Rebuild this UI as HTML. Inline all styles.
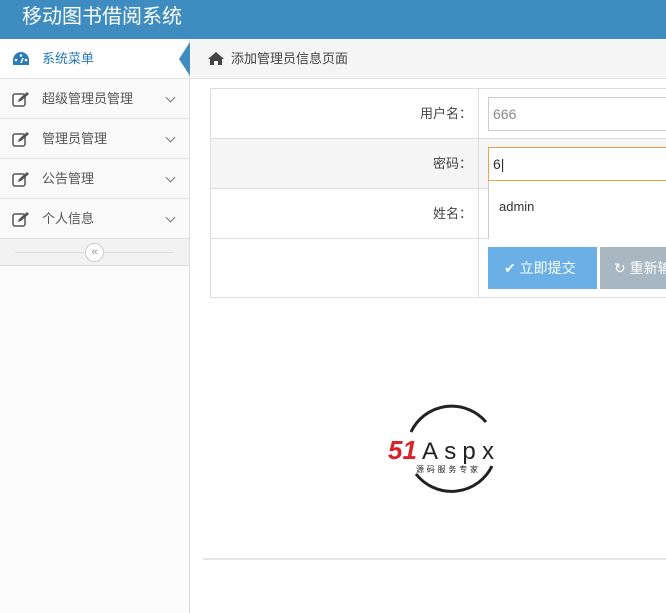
<!DOCTYPE html>
<html><head><meta charset="utf-8"><style>
*{margin:0;padding:0;box-sizing:border-box}
body{width:666px;height:613px;overflow:hidden;background:#fff;font-family:"Liberation Sans","Noto Sans CJK SC",sans-serif;font-size:13px;color:#444;position:relative}
.hd{position:absolute;left:0;top:0;width:666px;height:39px;background:#3f8cc0;color:#fff;font-size:20px;line-height:34px;padding-left:22px}
.sb{position:absolute;left:0;top:39px;width:190px;height:574px;background:#fcfcfd;border-right:1px solid #ddd}
.it{height:40px;border-bottom:1px solid #e3e3e3;background:#fafafa;line-height:39px;padding-left:42px;position:relative;color:#555}
.it.a{background:#fff;color:#2b7bb9}
.it .ic{position:absolute;left:12px;top:12px;width:18px;height:16px}
.it .ch{position:absolute;left:167px;top:15px;width:7px;height:7px;border-right:1.5px solid #777;border-bottom:1.5px solid #777;transform:rotate(45deg)}
.arr{position:absolute;left:179px;top:3px;width:0;height:0;border-top:17px solid transparent;border-bottom:17px solid transparent;border-right:11px solid #3f8cc0}
.col{height:27px;border-bottom:1px solid #ddd;position:relative;background:#f2f2f2}
.col:before{content:"";position:absolute;left:15px;right:15px;top:13px;border-top:1px solid #ddd}
.col span{position:absolute;left:85px;top:4px;width:19px;height:19px;border:1px solid #ccc;border-radius:50%;background:#fff;font-size:11px;line-height:16px;text-align:center;color:#999}
.bc{position:absolute;left:191px;top:39px;width:475px;height:40px;background:#f5f5f5;border-bottom:1px solid #e5e5e5;line-height:40px;padding-left:40px;color:#444}
.tb{position:absolute;left:210px;top:88px;width:470px;border:1px solid #ddd;border-right:none}
.r{height:50px;border-bottom:1px solid #ddd;position:relative}
.r.g{background:#f5f5f5}
.r:last-child{height:58px;border-bottom:none}
.lb{position:absolute;left:0;width:268px;height:100%;border-right:1px solid #ddd;text-align:right;padding-right:6px;line-height:50px}
.in{position:absolute;left:277px;top:8px;width:200px;height:34px;border:1px solid #ccc;background:#fff;padding-left:4px;line-height:32px;color:#888;font-size:14px}
.btn{position:absolute;top:8px;height:42px;line-height:42px;color:#fff;font-size:14px}
</style></head><body>
<div class="hd">移动图书借阅系统</div>
<div class="sb">
<div class="it a"><svg class="ic" viewBox="0 0 18 16"><path d="M9 1a8 8 0 0 0-8 8v5h16V9A8 8 0 0 0 9 1z" fill="#2b7bb9"/><circle cx="4" cy="9" r="1.3" fill="#fff"/><circle cx="9" cy="4.5" r="1.3" fill="#fff"/><circle cx="14" cy="9" r="1.3" fill="#fff"/><path d="M9 12l2-5" stroke="#fff" stroke-width="1.6"/></svg>系统菜单<div class="arr"></div></div>
<div class="it"><svg class="ic" viewBox="0 0 18 16"><rect x="1" y="3" width="12" height="12" rx="2" fill="none" stroke="#555" stroke-width="1.5"/><path d="M6 11l1-3 8-7 2 2-8 7z" fill="#555"/></svg>超级管理员管理<i class="ch"></i></div>
<div class="it"><svg class="ic" viewBox="0 0 18 16"><rect x="1" y="3" width="12" height="12" rx="2" fill="none" stroke="#555" stroke-width="1.5"/><path d="M6 11l1-3 8-7 2 2-8 7z" fill="#555"/></svg>管理员管理<i class="ch"></i></div>
<div class="it"><svg class="ic" viewBox="0 0 18 16"><rect x="1" y="3" width="12" height="12" rx="2" fill="none" stroke="#555" stroke-width="1.5"/><path d="M6 11l1-3 8-7 2 2-8 7z" fill="#555"/></svg>公告管理<i class="ch"></i></div>
<div class="it"><svg class="ic" viewBox="0 0 18 16"><rect x="1" y="3" width="12" height="12" rx="2" fill="none" stroke="#555" stroke-width="1.5"/><path d="M6 11l1-3 8-7 2 2-8 7z" fill="#555"/></svg>个人信息<i class="ch"></i></div>
<div class="col"><span>«</span></div>
</div>
<div class="bc"><svg style="position:absolute;left:16px;top:12px" width="18" height="15" viewBox="0 0 18 15"><path d="M9 1L1 8h2v6h4v-4h4v4h4V8h2z" fill="#444"/></svg>添加管理员信息页面</div>
<div class="tb">
<div class="r"><div class="lb">用户名：</div><div class="in">666</div></div>
<div class="r g"><div class="lb">密码：</div><div class="in" style="border-color:#e8a24a;color:#333">6|</div></div>
<div class="r"><div class="lb">姓名：</div><div style="position:absolute;left:277px;top:-8px;width:200px;height:58px;background:#fff;border-left:1px solid #ccc;padding:18px 0 0 10px;color:#333">admin</div></div>
<div class="r"><div class="lb" style="border-right:1px solid #ddd"></div><div class="btn" style="left:277px;width:109px;background:#6aafe5;padding-left:16px">✔ 立即提交</div><div class="btn" style="left:389px;width:100px;background:#a9b7c3;padding-left:14px">↻ 重新输入</div></div>
</div>
<svg style="position:absolute;left:386px;top:402px" width="130" height="92" viewBox="0 0 130 92"><path d="M25 30A45 45 0 0 1 100 20M106 64A45 45 0 0 1 30 72" fill="none" stroke="#222" stroke-width="3"/>
<text x="2" y="57" font-family="Liberation Sans" font-weight="bold" font-style="italic" font-size="26" fill="#d8232a">51</text>
<text x="36" y="57" font-family="Liberation Sans" font-size="24" fill="#222" textLength="72">Aspx</text>
<text x="30" y="70" font-family="Noto Sans CJK SC" font-size="8" fill="#222" textLength="62">源码服务专家</text></svg>
<div style="position:absolute;left:203px;top:558px;width:463px;border-top:2px solid #e5e5e5"></div>
</body></html>
